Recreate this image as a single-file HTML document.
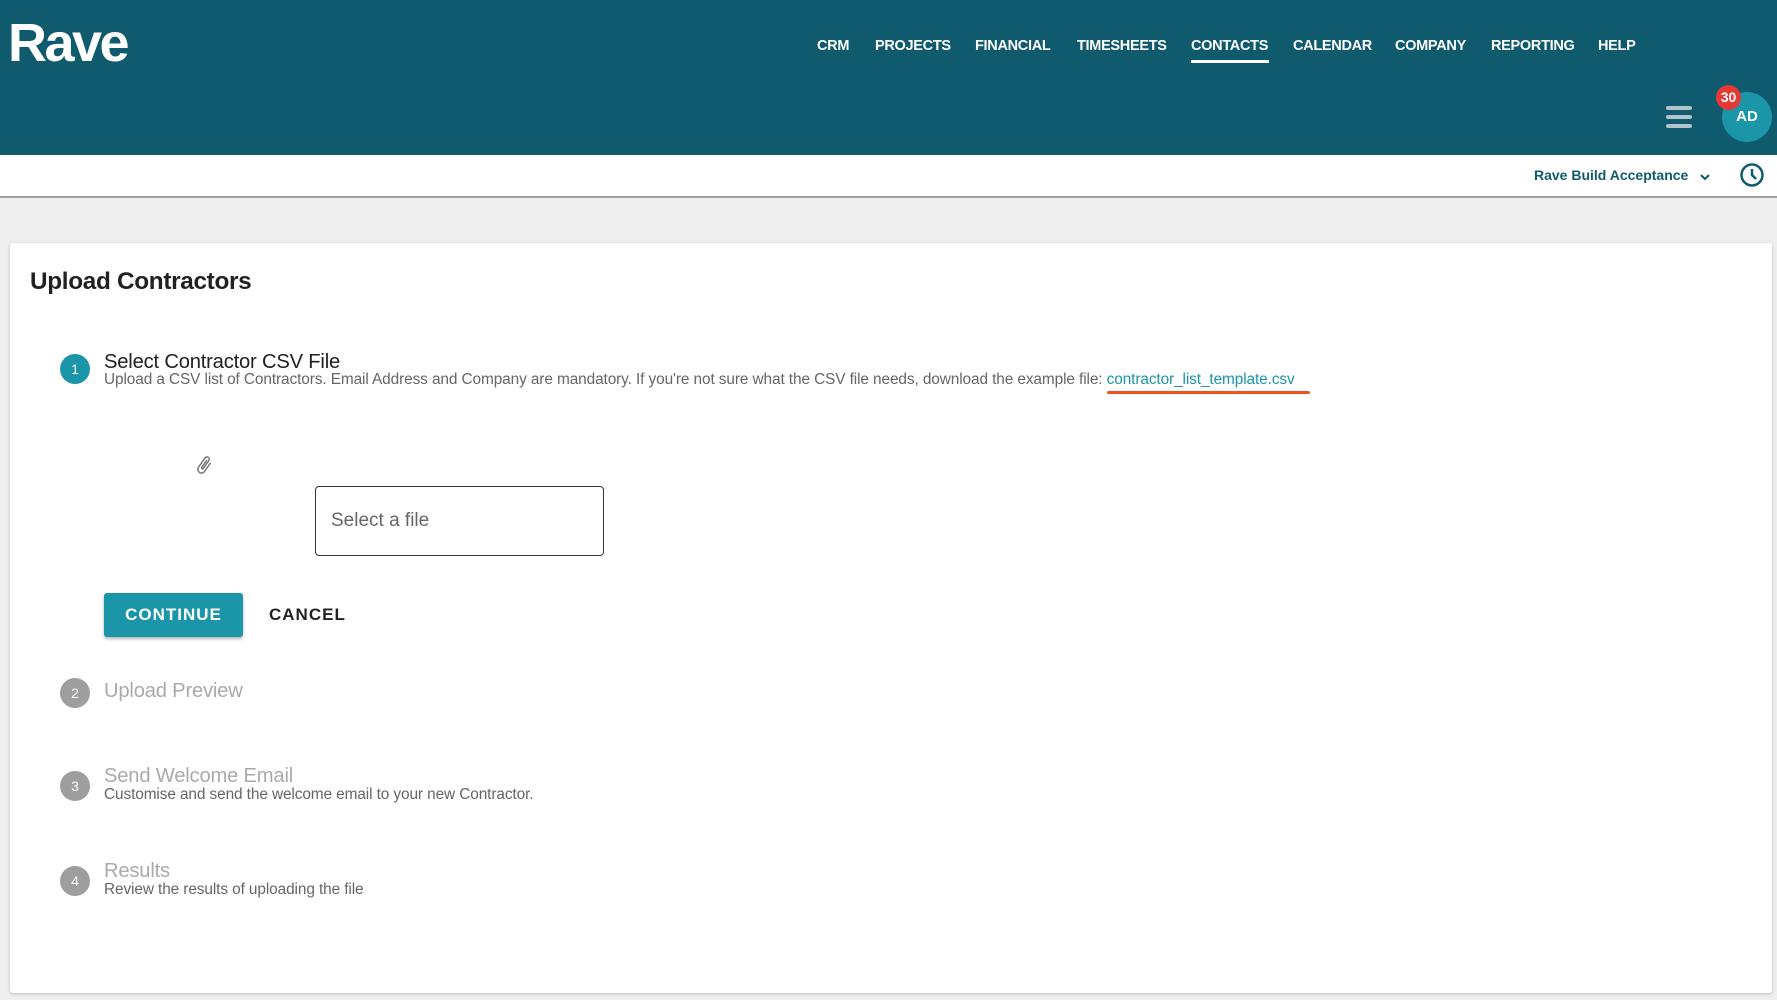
<!DOCTYPE html>
<html><head><meta charset="utf-8"><style>
*{margin:0;padding:0;box-sizing:border-box}
body{width:1777px;height:1000px;background:#eeeeee;font-family:"Liberation Sans",sans-serif;position:relative;overflow:hidden}
.a{position:absolute;white-space:nowrap}
.hdr{position:absolute;left:0;top:0;width:1777px;height:155px;background:#105a6e}
.nav{top:38px;font-size:14.5px;font-weight:bold;color:#fff;letter-spacing:-0.3px}
.sub{position:absolute;left:0;top:155px;width:1777px;height:43px;background:#fff;border-bottom:2px solid #9e9e9e}
.card{position:absolute;left:10px;top:243px;width:1762px;height:750px;background:#fff;border-radius:3px;box-shadow:0 1px 3px rgba(0,0,0,.2)}
.c{position:absolute;width:30px;height:30px;border-radius:50%;color:#fff;font-size:14px;text-align:center;line-height:30px}
.t{font-size:20.2px;color:#212121;letter-spacing:-0.2px}
.s{font-size:15.4px;color:#666;letter-spacing:-0.1px}
.g{color:#aaa}
</style></head><body>
<div class="hdr"></div>
<div class="a" style="left:8px;top:12px;font-size:54px;font-weight:bold;color:#fff;letter-spacing:-2.5px">Rave</div>
<div class="a nav" style="left:817px">CRM</div>
<div class="a nav" style="left:875px">PROJECTS</div>
<div class="a nav" style="left:975px">FINANCIAL</div>
<div class="a nav" style="left:1077px">TIMESHEETS</div>
<div class="a nav" style="left:1191px">CONTACTS</div>
<div class="a" style="left:1191px;top:60px;width:78px;height:3px;background:#fff"></div>
<div class="a nav" style="left:1293px">CALENDAR</div>
<div class="a nav" style="left:1395px">COMPANY</div>
<div class="a nav" style="left:1491px">REPORTING</div>
<div class="a nav" style="left:1598px">HELP</div>
<div class="a" style="left:1666px;top:106px;width:26px;height:4px;background:#b0c4ca;border-radius:2px"></div>
<div class="a" style="left:1666px;top:115px;width:26px;height:4px;background:#b0c4ca;border-radius:2px"></div>
<div class="a" style="left:1666px;top:124px;width:26px;height:4px;background:#b0c4ca;border-radius:2px"></div>
<div class="a" style="left:1722px;top:92px;width:50px;height:50px;border-radius:50%;background:#1a96a8;color:#fff;font-weight:bold;font-size:15px;text-align:center;line-height:50px">AD</div>
<div class="a" style="left:1716px;top:85px;width:25px;height:25px;border-radius:50%;background:#e53935;color:#fff;font-weight:bold;font-size:14px;text-align:center;line-height:25px">30</div>
<div class="sub"></div>
<div class="a" style="left:1534px;top:167px;font-size:14px;font-weight:bold;color:#105a6e">Rave Build Acceptance</div>
<svg class="a" style="left:1698px;top:170px" width="14" height="14" viewBox="0 0 14 14"><path d="M3 5l4 4 4-4" stroke="#105a6e" stroke-width="2" fill="none"/></svg>
<svg class="a" style="left:1739px;top:162px" width="26" height="26" viewBox="0 0 26 26"><circle cx="13" cy="13" r="10.5" stroke="#105a6e" stroke-width="2.5" fill="none"/><path d="M13 7v6l4 4" stroke="#105a6e" stroke-width="2.5" fill="none"/></svg>
<div class="card"></div>
<div class="a" style="left:30px;top:268px;font-size:24.3px;color:#212121;font-weight:bold;letter-spacing:-0.3px">Upload Contractors</div>

<div class="c" style="left:60px;top:354px;background:#1a96a8">1</div>
<div class="a t" style="left:104px;top:351px">Select Contractor CSV File</div>
<div class="a s" style="left:104px;top:371px">Upload a CSV list of Contractors. Email Address and Company are mandatory. If you're not sure what the CSV file needs, download the example file: <span style="color:#1a96a8">contractor_list_template.csv</span></div>
<div class="a" style="left:1107px;top:391px;width:203px;height:3px;background:#f4511e;border-radius:2px"></div>
<svg class="a" style="left:193px;top:453px" width="22" height="24" viewBox="0 0 24 24"><path d="M16.5 6v11.5a4 4 0 0 1-8 0V5a2.5 2.5 0 0 1 5 0v10.5a1 1 0 0 1-2 0V6" stroke="#757575" stroke-width="1.6" fill="none" transform="rotate(35 12 12)"/></svg>
<div class="a" style="left:315px;top:486px;width:289px;height:70px;border:1.5px solid #333;border-radius:4px"></div>
<div class="a" style="left:331px;top:510px;font-size:19px;color:#666">Select a file</div>
<div class="a" style="left:104px;top:593px;width:139px;height:44px;background:#1a96a8;border-radius:3px;box-shadow:0 2px 3px rgba(0,0,0,.3);color:#fff;font-weight:bold;font-size:17px;letter-spacing:1px;text-align:center;line-height:44px">CONTINUE</div>
<div class="a" style="left:269px;top:605px;font-size:17px;color:#222;letter-spacing:1px;font-weight:bold">CANCEL</div>

<div class="c" style="left:60px;top:678px;background:#9e9e9e">2</div>
<div class="a t g" style="left:104px;top:680px">Upload Preview</div>
<div class="c" style="left:60px;top:771px;background:#9e9e9e">3</div>
<div class="a t g" style="left:104px;top:765px">Send Welcome Email</div>
<div class="a s" style="left:104px;top:786px">Customise and send the welcome email to your new Contractor.</div>
<div class="c" style="left:60px;top:866px;background:#9e9e9e">4</div>
<div class="a t g" style="left:104px;top:860px">Results</div>
<div class="a s" style="left:104px;top:881px">Review the results of uploading the file</div>
</body></html>
